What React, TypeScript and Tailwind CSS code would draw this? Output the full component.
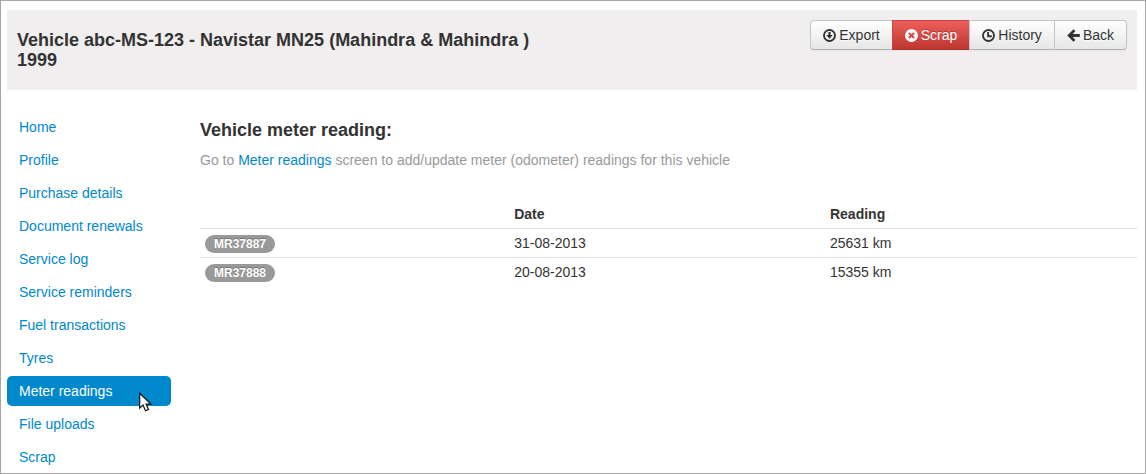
import type { ReactNode } from "react";

const sections = [
  "Home",
  "Profile",
  "Purchase details",
  "Document renewals",
  "Service log",
  "Service reminders",
  "Fuel transactions",
  "Tyres",
  "Meter readings",
  "File uploads",
  "Scrap",
];

const readings = [
  { id: "MR37887", date: "31-08-2013", reading: "25631 km" },
  { id: "MR37888", date: "20-08-2013", reading: "15355 km" },
];

function Icon({ children }: { children: ReactNode }) {
  return (
    <svg viewBox="0 0 12 12" className="size-[13px] shrink-0" fill="currentColor" aria-hidden="true">
      {children}
    </svg>
  );
}

const buttonBase = "flex h-[30px] cursor-pointer items-center gap-[3px] border px-3 py-1";
const plain =
  "border-[#c5c5c5] border-b-[#b3b3b3] bg-linear-to-b from-white to-[#e6e6e6] text-[#333333] [text-shadow:0_1px_1px_rgba(255,255,255,0.75)]";
const danger =
  "border-[#c9453f] border-b-[#b3322c] bg-linear-to-b from-[#ee5f5b] to-[#bd362f] text-white [text-shadow:0_-1px_0_rgba(0,0,0,0.25)]";

function Toolbar() {
  return (
    <div className="flex shrink-0 rounded shadow-[0_1px_2px_rgba(0,0,0,0.05)]">
      <button type="button" className={`${buttonBase} ${plain} rounded-l`}>
        <Icon>
          <circle cx="6" cy="6" r="5.1" fill="none" stroke="currentColor" strokeWidth="1.7" />
          <path d="M5 2.8h2v2.7h2L6 9 3 5.5h2z" />
        </Icon>
        Export
      </button>
      <button type="button" className={`${buttonBase} ${danger} -ml-px`}>
        <Icon>
          <path
            fillRule="evenodd"
            d="M6 0a6 6 0 1 0 0 12A6 6 0 0 0 6 0zM4.3 2.9 6 4.6l1.7-1.7 1.4 1.4L7.4 6l1.7 1.7-1.4 1.4L6 7.4 4.3 9.1 2.9 7.7 4.6 6 2.9 4.3z"
          />
        </Icon>
        Scrap
      </button>
      <button type="button" className={`${buttonBase} ${plain} -ml-px`}>
        <Icon>
          <circle cx="6" cy="6" r="5.1" fill="none" stroke="currentColor" strokeWidth="1.7" />
          <path d="M4.8 2.8h1.7v3H9v1.7H4.8z" />
        </Icon>
        History
      </button>
      <button type="button" className={`${buttonBase} ${plain} -ml-px rounded-r`}>
        <Icon>
          <path d="M6 0.2 7.8 1.8 5.3 4.7H11.8v2.6H5.3l2.5 2.9L6 11.8 0.2 6z" />
        </Icon>
        Back
      </button>
    </div>
  );
}

function Pointer() {
  return (
    <svg viewBox="0 0 13 20" className="absolute top-4 left-[132px] h-5 w-[13px]" aria-hidden="true">
      <path
        d="M.7 1.2v15l3.3-3.1 2.5 5.7 3-1.3-2.4-5.4h4.8z"
        fill="#fff"
        stroke="#111"
        strokeWidth="1.2"
      />
    </svg>
  );
}

export default function App() {
  return (
    <div className="min-h-screen border border-[#a6a6a6] bg-white pt-[9px] pr-2 pl-1.5 font-['Liberation_Sans',Arial,sans-serif] text-sm leading-5 text-[#333333]">
      <header className="flex items-start justify-between gap-4 bg-[#f0eeef] p-2.5">
        <h1 className="max-w-[540px] py-2.5 text-lg leading-5 font-bold">
          Vehicle abc-MS-123 - Navistar MN25 (Mahindra &amp; Mahindra )
          <br />
          1999
        </h1>
        <Toolbar />
      </header>

      <div className="flex gap-[29px] pt-[22px]">
        <nav className="w-[164px] shrink-0" aria-label="Vehicle sections">
          <ul className="flex flex-col gap-[3px]">
            {sections.map((name) => {
              const active = name === "Meter readings";
              return (
                <li key={name} className="relative">
                  <a
                    href="#"
                    aria-current={active ? "page" : undefined}
                    className={`block rounded-[5px] px-3 py-[5px] ${active ? "bg-[#0088cc] text-white" : "text-[#0088cc]"}`}
                  >
                    {name}
                  </a>
                  {active && <Pointer />}
                </li>
              );
            })}
          </ul>
        </nav>

        <main className="min-w-0 flex-1 pt-2">
          <h2 className="text-lg leading-5 font-bold">Vehicle meter reading:</h2>
          <p className="mt-2.5 text-[#999999]">
            Go to{" "}
            <a href="#" className="text-[#0088cc]">
              Meter readings
            </a>{" "}
            screen to add/update meter (odometer) readings for this vehicle
          </p>
          <table className="mt-[30px] w-full table-fixed text-left">
            <thead>
              <tr>
                <th className="w-[33%] px-[5px] py-1" aria-label="Reference" />
                <th className="w-[33.7%] px-[5px] py-1 font-bold">Date</th>
                <th className="px-[5px] py-1 font-bold">Reading</th>
              </tr>
            </thead>
            <tbody>
              {readings.map((row) => (
                <tr key={row.id} className="border-t border-[#dddddd]">
                  <td className="px-[5px] py-1">
                    <span className="rounded-full bg-[#999999] px-[9px] py-0.5 text-xs leading-[14px] font-bold text-white [text-shadow:0_-1px_0_rgba(0,0,0,0.25)]">
                      {row.id}
                    </span>
                  </td>
                  <td className="px-[5px] py-1">{row.date}</td>
                  <td className="px-[5px] py-1">{row.reading}</td>
                </tr>
              ))}
            </tbody>
          </table>
        </main>
      </div>
    </div>
  );
}
